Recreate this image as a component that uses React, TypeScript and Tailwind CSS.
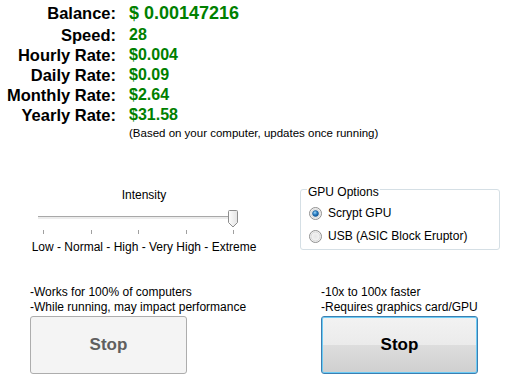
import React from 'react';

const STATS = [
  { label: 'Speed:', value: '28' },
  { label: 'Hourly Rate:', value: '$0.004' },
  { label: 'Daily Rate:', value: '$0.09' },
  { label: 'Monthly Rate:', value: '$2.64' },
  { label: 'Yearly Rate:', value: '$31.58' },
];

const TICKS = [43, 91, 138, 186, 233];

function Radio({ checked }: { checked?: boolean }) {
  return (
    <svg width="13" height="13" viewBox="0 0 13 13" className="shrink-0">
      <defs>
        <radialGradient id={checked ? 'rg-on' : 'rg-off'} cx="0.5" cy="0.5" r="0.5">
          <stop offset="0" stopColor="#e6e6e6" />
          <stop offset="1" stopColor="#f8f8f8" />
        </radialGradient>
        <radialGradient id="dot" cx="0.4" cy="0.35" r="0.7">
          <stop offset="0" stopColor="#9fd6f6" />
          <stop offset="0.5" stopColor="#2a7fc4" />
          <stop offset="1" stopColor="#0e4f8f" />
        </radialGradient>
      </defs>
      <circle cx="6.5" cy="6.5" r="6" fill={checked ? 'url(#rg-on)' : 'url(#rg-off)'} stroke="#8f8f8f" />
      <circle cx="6.5" cy="6.5" r="4.5" fill="none" stroke="#d9d9d9" />
      {checked && <circle cx="6.5" cy="6.5" r="3" fill="url(#dot)" stroke="#1d5c96" strokeWidth="0.6" />}
    </svg>
  );
}

export default function App() {
  return (
    <div className="w-[506px] h-[386px] bg-white text-black overflow-hidden font-['Liberation_Sans',Arial,sans-serif]">
      {/* Stats */}
      <div className="pt-[1px] grid grid-cols-[116px_1fr] gap-x-[13px] items-center">
        <div className="text-right text-[16.5px] font-bold leading-[24px]">Balance:</div>
        <div className="text-[18px] font-bold text-[#008000] leading-[24px]">$ 0.00147216</div>
        {STATS.map((s) => (
          <React.Fragment key={s.label}>
            <div className="text-right text-[16.5px] font-bold leading-[20px] whitespace-nowrap">{s.label}</div>
            <div className="text-[16px] font-bold text-[#008000] leading-[20px]">{s.value}</div>
          </React.Fragment>
        ))}
        <div />
        <div className="text-[11.5px] leading-[16px] whitespace-nowrap">(Based on your computer, updates once running)</div>
      </div>

      {/* Controls */}
      <div className="mt-[45px] flex items-start">
        <div className="ml-[30px] w-[228px] flex flex-col items-center">
          <div className="text-[12px] leading-[14px] mt-[2px]">Intensity</div>
          <div className="relative w-[228px] h-[30px] mt-[7px]">
            <div className="absolute left-[8px] top-[7px] w-[200px] h-[3px] border-t border-[#a8a8a8] bg-[#ececec]" />
            <svg className="absolute left-[198px] top-[1px]" width="10" height="18" viewBox="0 0 10 18">
              <defs>
                <linearGradient id="thumb" x1="0" y1="0" x2="1" y2="0">
                  <stop offset="0" stopColor="#fdfdfd" />
                  <stop offset="1" stopColor="#e3e3e3" />
                </linearGradient>
              </defs>
              <path d="M1.5 0.5 H8.5 Q9.5 0.5 9.5 1.5 V12.5 L5 17 L0.5 12.5 V1.5 Q0.5 0.5 1.5 0.5 Z" fill="url(#thumb)" stroke="#8d8d8d" />
            </svg>
            {TICKS.map((x) => (
              <div key={x} className="absolute top-[21px] w-px h-[4px] bg-[#a0a0a0]" style={{ left: x - 30 }} />
            ))}
          </div>
          <div className="text-[12px] leading-[14px] mt-[1px] whitespace-nowrap">Low - Normal - High - Very High - Extreme</div>
        </div>

        <fieldset className="ml-[42px] mt-[-4px] w-[200px] h-[68px] border border-[#d5dfe5] rounded-[3px] px-[8px]">
          <legend className="relative top-[3px] text-[12px] leading-[14px] px-[1px] ml-[-2px]">GPU Options</legend>
          <div className="flex items-center gap-[6px] text-[12px] leading-[14px] mt-[10px]">
            <Radio checked />
            <span>Scrypt GPU</span>
          </div>
          <div className="flex items-center gap-[6px] text-[12px] leading-[14px] mt-[9px]">
            <Radio />
            <span>USB (ASIC Block Eruptor)</span>
          </div>
        </fieldset>
      </div>

      {/* Modes */}
      <div className="mt-[31px] flex">
        <div className="ml-[30px] w-[260px]">
          <div className="text-[12px] leading-[15px]">-Works for 100% of computers</div>
          <div className="text-[12px] leading-[15px]">-While running, may impact performance</div>
          <button className="mt-[1px] w-[157px] h-[58px] rounded-[3px] border border-[#adadad] bg-[#f4f4f4] text-[17px] font-bold text-[#5f5f5f]">
            Stop
          </button>
        </div>
        <div className="ml-[31px]">
          <div className="text-[12px] leading-[15px]">-10x to 100x faster</div>
          <div className="text-[12px] leading-[15px]">-Requires graphics card/GPU</div>
          <button className="mt-[1px] w-[157px] h-[58px] rounded-[3px] border border-[#3c7fb1] shadow-[inset_0_0_0_1px_#6ccbf5] bg-[linear-gradient(#f2f2f2_0%,#ebebeb_50%,#dddddd_50%,#cfcfcf_100%)] text-[17px] font-bold text-black">
            Stop
          </button>
        </div>
      </div>
    </div>
  );
}
